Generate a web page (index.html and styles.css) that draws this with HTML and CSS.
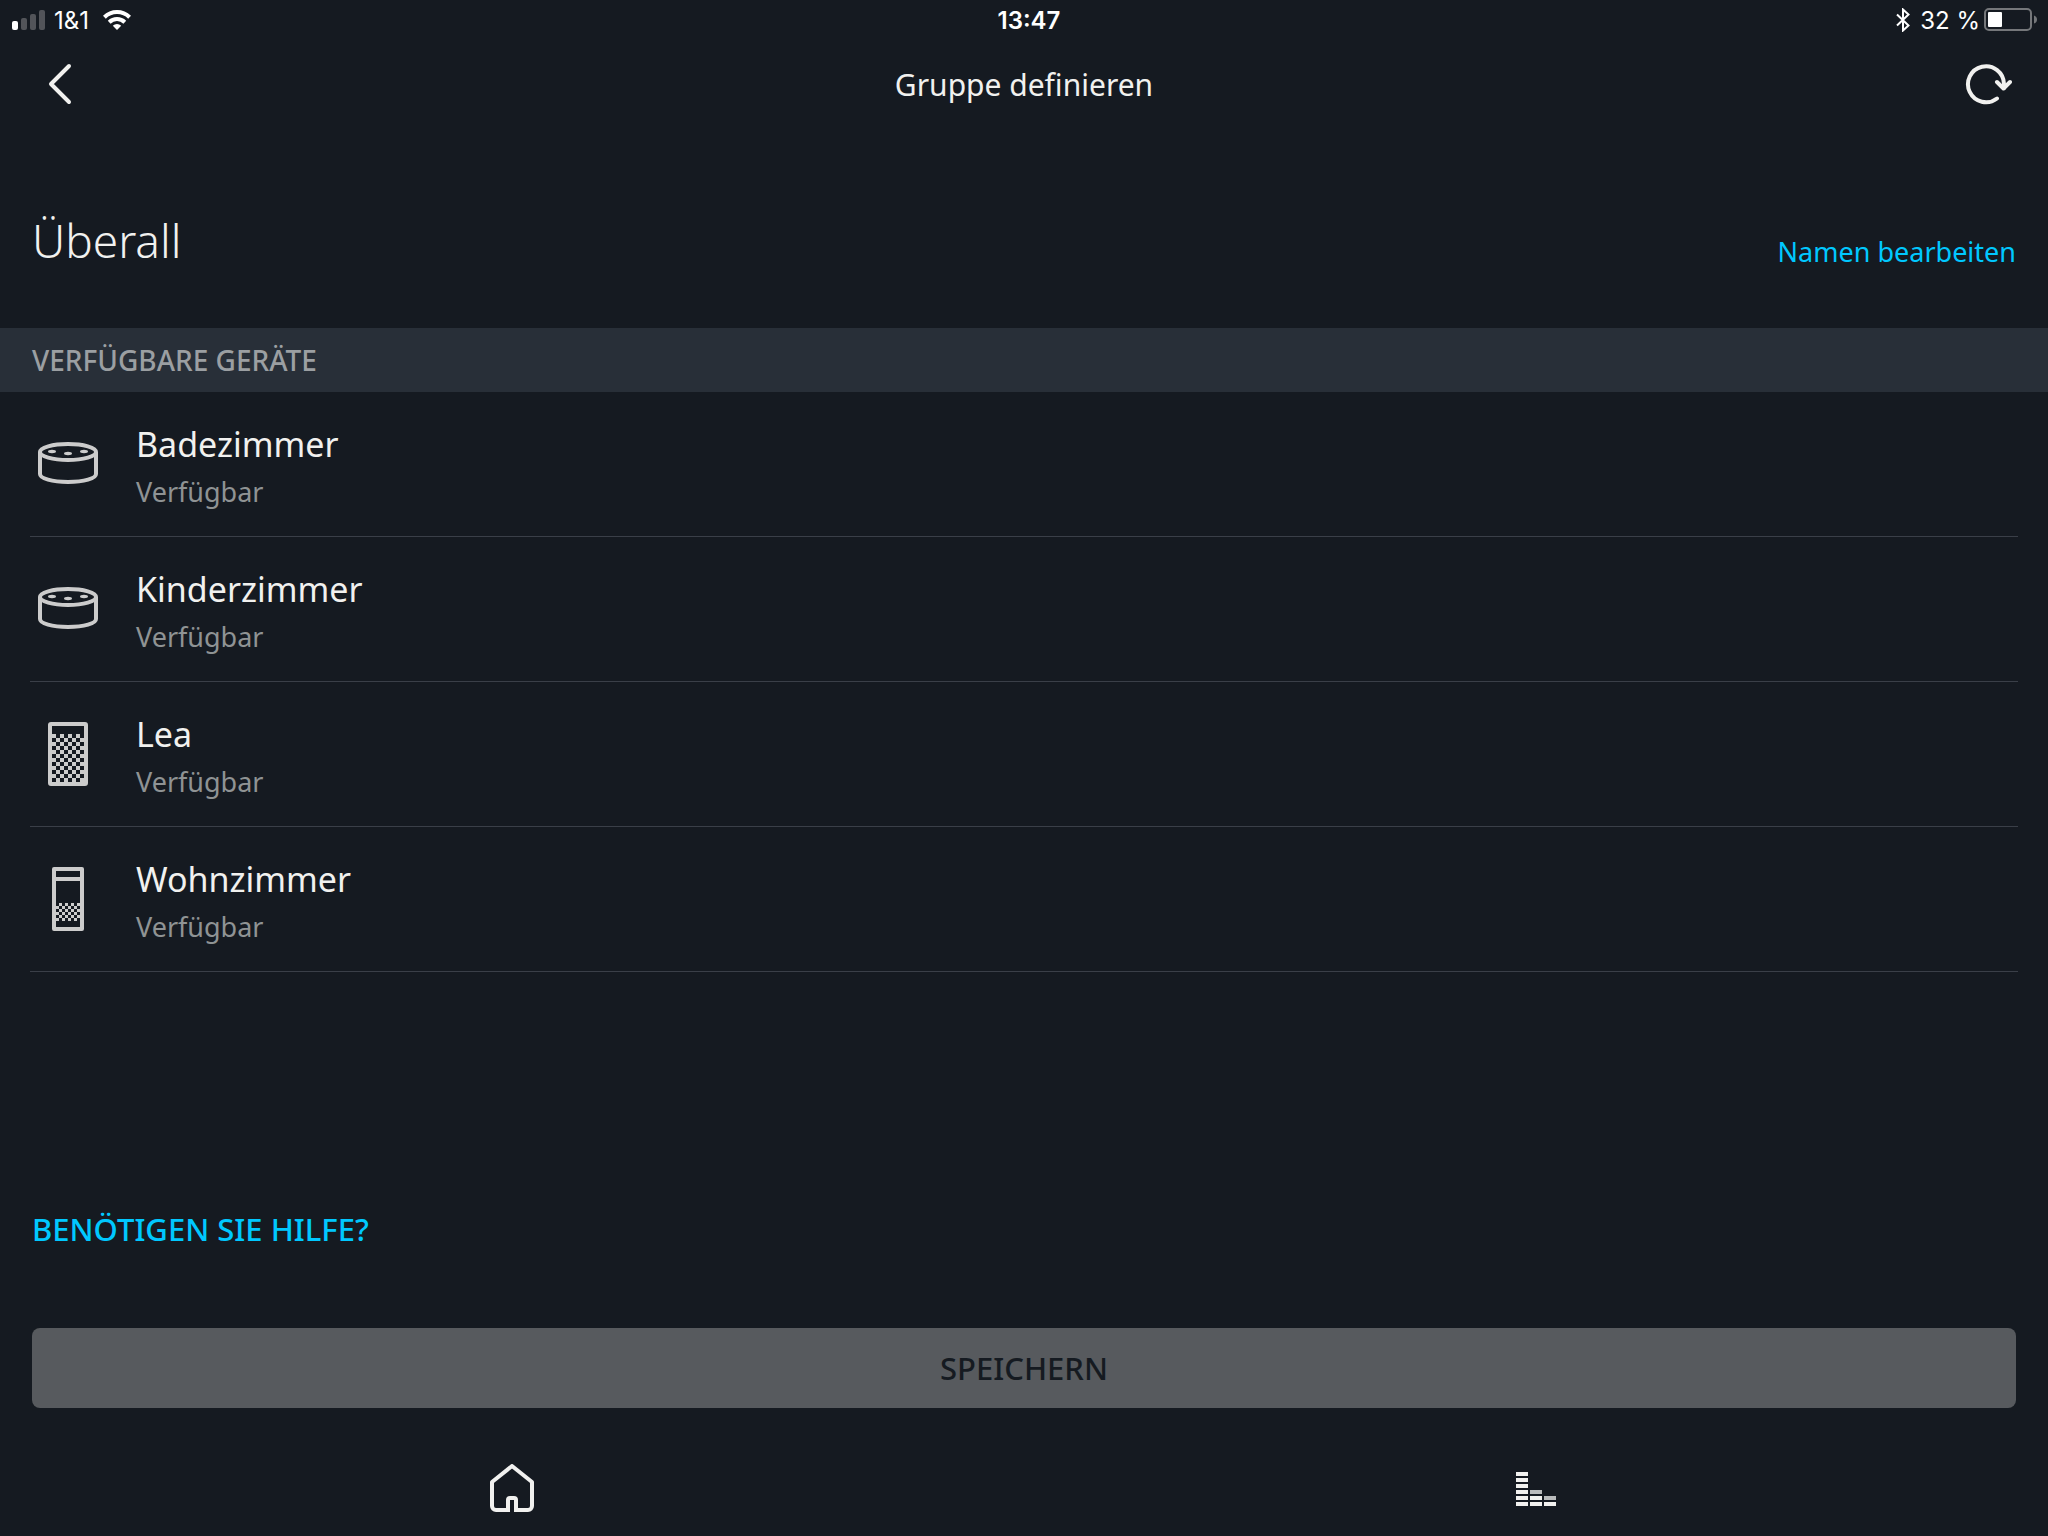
FILE: index.html
```html
<!DOCTYPE html>
<html lang="de">
<head>
    <meta charset="UTF-8">
    <meta name="viewport" content="width=device-width, initial-scale=1.0">
    <title>Gruppe definieren</title>
    <link rel="stylesheet" href="styles.css">
</head>
<body>

    <!-- Status Bar -->
    <div class="status-bar">
        <div class="status-left">
            <svg class="signal" width="34" height="20" viewBox="0 0 34 20">
                <rect x="0" y="11" width="6" height="9" rx="2" fill="#fff"/>
                <rect x="9" y="8" width="6" height="12" rx="2" fill="#525459"/>
                <rect x="18" y="4" width="6" height="16" rx="2" fill="#525459"/>
                <rect x="27" y="0" width="6" height="20" rx="2" fill="#525459"/>
            </svg>
            <span>1&amp;1</span>
            <svg class="wifi" width="28" height="20" viewBox="0 0 28 20">
                <g fill="none" stroke="#fff" stroke-width="4">
                    <path d="M1.4 7.2a18 18 0 0 1 25.2 0"/>
                    <path d="M6.2 12.2a11.2 11.2 0 0 1 15.6 0"/>
                </g>
                <path d="M14 20l-4.2-4.2a6 6 0 0 1 8.400 0z" fill="#fff"/>
            </svg>
        </div>
        <span class="clock">13:47</span>
        <div class="status-right">
            <svg class="bluetooth" width="14" height="24" viewBox="0 0 14 24" fill="none" stroke="#fff" stroke-width="2">
                <path d="M1 6.500l11.500 11L7 22.500V1.500l5.500 5L1 17.500"/>
            </svg>
            <span>32 %</span>
            <svg class="battery" width="54" height="24" viewBox="0 0 54 24">
                <rect x="1" y="1" width="46" height="21" rx="4" fill="none" stroke="#75777a" stroke-width="2"/>
                <rect x="4" y="4" width="14" height="15" rx="1" fill="#fff"/>
                <path d="M50 7.500q3 1 3 4t-3 4z" fill="#75777a"/>
            </svg>
        </div>
    </div>

    <!-- Header -->
    <header>
        <button class="icon-button" aria-label="Zurück">
            <svg width="24" height="42" viewBox="0 0 24 42" fill="none" stroke="#f1f1ef" stroke-width="4" stroke-linecap="round" stroke-linejoin="round">
                <path d="M21 3L3 21l18 18"/>
            </svg>
        </button>
        <h1>Gruppe definieren</h1>
        <button class="icon-button refresh" aria-label="Aktualisieren">
            <svg width="48" height="42" viewBox="0 0 48 42" fill="none" stroke="#f1f1ef" stroke-width="4" stroke-linecap="round" stroke-linejoin="round">
                <path d="M33 35.500A18 18 0 1 1 40 21v4"/>
                <path d="M33 19l6.500 6.500L46 19"/>
            </svg>
        </button>
    </header>

    <main>
        <div class="group-name">
            <h2>Überall</h2>
            <a href="#">Namen bearbeiten</a>
        </div>

        <!-- Device List -->
        <h3 class="section-title">VERFÜGBARE GERÄTE</h3>
        <ul class="devices">
            <li class="device">
                <svg width="64" height="64" viewBox="0 0 64 64">
                    <use href="#dot"/>
                </svg>
                <div class="device-text">
                    <p class="device-name">Badezimmer</p>
                    <p class="device-status">Verfügbar</p>
                </div>
            </li>
            <li class="device">
                <svg width="64" height="64" viewBox="0 0 64 64">
                    <use href="#dot"/>
                </svg>
                <div class="device-text">
                    <p class="device-name">Kinderzimmer</p>
                    <p class="device-status">Verfügbar</p>
                </div>
            </li>
            <li class="device">
                <svg width="64" height="64" viewBox="0 0 64 64">
                    <rect x="14" y="2" width="36" height="60" rx="1" fill="none" stroke="#ccc" stroke-width="4"/>
                    <rect x="16" y="12" width="32" height="48" fill="url(#mesh)"/>
                </svg>
                <div class="device-text">
                    <p class="device-name">Lea</p>
                    <p class="device-status">Verfügbar</p>
                </div>
            </li>
            <li class="device">
                <svg width="64" height="64" viewBox="0 0 64 64">
                    <path d="M18 2h28v60H18zM18 12h28" fill="none" stroke="#ccc" stroke-width="4" stroke-linejoin="round"/>
                    <rect x="20" y="36" width="24" height="18" fill="url(#mesh-small)"/>
                </svg>
                <div class="device-text">
                    <p class="device-name">Wohnzimmer</p>
                    <p class="device-status">Verfügbar</p>
                </div>
            </li>
        </ul>

        <a class="help" href="#">BENÖTIGEN SIE HILFE?</a>
        <button class="save">SPEICHERN</button>
    </main>

    <!-- Bottom Navigation -->
    <nav>
        <a href="#" aria-label="Startseite">
            <svg width="44" height="48" viewBox="0 0 44 48" fill="none" stroke="#f1f1ef" stroke-width="4" stroke-linejoin="round">
                <path d="M18 48V36a2 2 0 0 1 2-2h4a2 2 0 0 1 2 2V48M18 46H6a4 4 0 0 1-4-4V18L22 2l20 16V42a4 4 0 0 1-4 4H26"/>
            </svg>
        </a>
        <a href="#" aria-label="Musik">
            <svg width="40" height="48" viewBox="0 0 40 48" fill="#f1f1ef">
                <path d="M0 8h12v4H0zM0 14h12v4H0zM0 20h12v4H0zM0 26h12v4H0zM0 32h12v4H0zM0 38h12v4H0zM14 32h12v4H14zM14 38h12v4H14zM28 38h12v4H28z"/>
                <path d="M14 26h12v4H14zM28 32h12v4H28z" fill="#b9bbbc"/>
            </svg>
        </a>
    </nav>

    <!-- Shared icon parts -->
    <svg class="defs" width="0" height="0" aria-hidden="true">
        <defs>
            <g id="dot" fill="none" stroke="#ccc" stroke-width="4">
                <ellipse cx="32" cy="20" rx="28" ry="8"/>
                <path d="M4 20v22c0 4.500 12 8 28 8s28-3.500 28-8V20"/>
                <g fill="#ccc" stroke="none">
                    <ellipse cx="16" cy="19.500" rx="4" ry="1.700"/>
                    <ellipse cx="32" cy="21.500" rx="4" ry="1.700"/>
                    <ellipse cx="48" cy="19.500" rx="4" ry="1.700"/>
                </g>
            </g>
            <pattern id="mesh" x="16" y="12" width="8" height="8" patternUnits="userSpaceOnUse">
                <path d="M0 0h4v4H0zM4 4h4v4H4z" fill="#ccc"/>
            </pattern>
            <pattern id="mesh-small" x="20" y="36" width="6" height="6" patternUnits="userSpaceOnUse">
                <path d="M3 0h3v3H3zM0 3h3v3H0z" fill="#ccc"/>
            </pattern>
        </defs>
    </svg>

</body>
</html>
```

FILE: styles.css
```css
/* Global Styles */
body {
    font-family: "Noto Sans", "Open Sans", sans-serif;
    margin: 0;
    min-height: 100vh;
    display: flex;
    flex-direction: column;
    background-color: #151a21;
    color: #f1f1ef;
}

h1, h2, h3, p, ul {
    margin: 0;
    padding: 0;
}

svg {
    display: block;
    flex-shrink: 0;
}

a {
    color: #00c8ff;
    text-decoration: none;
}

button {
    font-family: inherit;
    border: none;
    cursor: pointer;
}

.defs {
    position: absolute;
}

/* Status Bar */
.status-bar {
    display: grid;
    grid-template-columns: 1fr auto 1fr;
    align-items: center;
    height: 40px;
    padding: 0 10px 0 12px;
    font-family: Inter, sans-serif;
    font-size: 24px;
    color: #fff;
}

.status-left, .status-right {
    display: flex;
    align-items: center;
}

.status-left {
    gap: 8px;
}

.status-right {
    justify-content: flex-end;
    gap: 4px;
}

.wifi {
    margin-left: 6px;
}

.bluetooth {
    margin-right: 6px;
}

.clock {
    padding-left: 8px;
    font-weight: 600;
}

/* Header */
header {
    display: grid;
    grid-template-columns: 1fr auto 1fr;
    align-items: center;
    height: 88px;
    padding: 0 36px;
}

header h1 {
    font-size: 30px;
    font-weight: 400;
}

.icon-button {
    justify-self: start;
    background: none;
    padding: 0 12px;
}

.refresh {
    justify-self: end;
    padding: 0;
}

/* Content */
main {
    flex: 1;
    display: flex;
    flex-direction: column;
}

.group-name {
    display: flex;
    justify-content: space-between;
    align-items: flex-end;
    padding: 80px 32px 56px;
}

.group-name h2 {
    font-size: 46px;
    line-height: 64px;
    font-weight: 300;
}

.group-name a {
    font-size: 27px;
    line-height: 40px;
}

.section-title {
    padding: 0 32px;
    background-color: #282f38;
    color: #9b9fa2;
    font-size: 28px;
    line-height: 64px;
    font-weight: 500;
}

/* Devices */
.devices {
    list-style: none;
    padding: 0 30px;
}

.device {
    display: flex;
    align-items: center;
    gap: 36px;
    height: 144px;
    padding-left: 6px;
    border-bottom: 1px solid #3a3f48;
}

.device-text {
    padding-top: 8px;
}

.device-name {
    font-size: 34px;
    line-height: 48px;
}

.device-status {
    font-size: 27px;
    line-height: 48px;
    color: #8f9394;
}

.help {
    margin: auto 32px 72px;
    font-size: 31px;
    line-height: 54px;
    font-weight: 500;
}

.save {
    height: 80px;
    margin: 0 32px;
    border-radius: 8px;
    background-color: #575a5e;
    color: #151a21;
    font-size: 31px;
    font-weight: 500;
}

/* Bottom Navigation */
nav {
    display: flex;
    padding: 56px 0 24px;
}

nav a {
    flex: 1;
    display: flex;
    justify-content: center;
}
```
